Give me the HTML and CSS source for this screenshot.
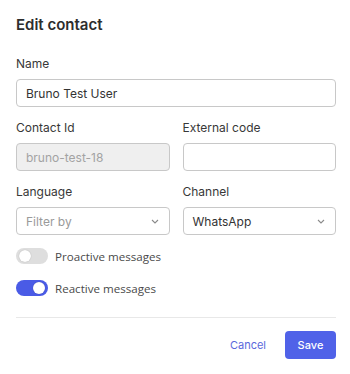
FILE: index.html
```html
<!DOCTYPE html>
<html>
	<head>
		<meta charset="utf-8">
		<title>Edit contact</title>
		<link rel="stylesheet" href="styles.css">
	</head>
	<body>
		<div class="dialog">
			<h2 class="title">Edit contact</h2>
			<div class="field">
				<label class="label">Name</label>
				<input class="input" type="text" value="Bruno Test User">
			</div>
			<div class="row">
				<div class="field">
					<label class="label">Contact Id</label>
					<input class="input" type="text" value="bruno-test-18" disabled>
				</div>
				<div class="field">
					<label class="label">External code</label>
					<input class="input" type="text">
				</div>
			</div>
			<div class="row">
				<div class="field">
					<label class="label">Language</label>
					<div class="select placeholder">
						<span>Filter by</span>
						<svg class="chevron" width="8" height="5" viewBox="0 0 8 5"><path d="M1 1l3 3 3-3" fill="none" stroke="#8a8a8a" stroke-width="1.1"/></svg>
					</div>
				</div>
				<div class="field">
					<label class="label">Channel</label>
					<div class="select">
						<span>WhatsApp</span>
						<svg class="chevron" width="8" height="5" viewBox="0 0 8 5"><path d="M1 1l3 3 3-3" fill="none" stroke="#8a8a8a" stroke-width="1.1"/></svg>
					</div>
				</div>
			</div>
			<div class="toggles">
				<div class="toggle-row">
					<span class="switch"><span class="knob"></span></span>
					<span class="toggle-label">Proactive messages</span>
				</div>
				<div class="toggle-row">
					<span class="switch on"><span class="knob"></span></span>
					<span class="toggle-label">Reactive messages</span>
				</div>
			</div>
			<div class="footer">
				<button type="button" class="btn-link">Cancel</button>
				<button type="button" class="btn-primary">Save</button>
			</div>
		</div>
	</body>
</html>
```

FILE: styles.css
```css
*{
	margin: 0;
	padding: 0;
	box-sizing: border-box;
}
body{
	background: #fff;
	font-family: Inter, "Liberation Sans", sans-serif;
	color: #333;
}
.dialog{
	width: 350px;
	padding: 16px 14px 0 16px;
}
.title{
	font-size: 15px;
	font-weight: 600;
	line-height: 18px;
	color: #2d2d2d;
	margin-bottom: 22px;
}
.field{
	display: flex;
	flex-direction: column;
	gap: 7px;
	flex: 1;
}
.label{
	font-size: 12px;
	line-height: 16px;
	color: #383838;
}
.row{
	display: flex;
	gap: 13px;
	margin-top: 13px;
}
.input, .select{
	height: 28px;
	border: 1px solid #c8c8c8;
	border-radius: 4px;
	padding: 0 9px;
	font-family: inherit;
	font-size: 12px;
	color: #333;
	background: #fff;
	width: 100%;
}
.input:disabled{
	background: #efefef;
	color: #a3a3a3;
}
.select{
	display: flex;
	align-items: center;
	justify-content: space-between;
	padding-right: 10px;
}
.select.placeholder{
	color: #9a9a9a;
}
.toggles{
	display: flex;
	flex-direction: column;
	gap: 16px;
	margin-top: 13px;
	padding-bottom: 21px;
	border-bottom: 1px solid #e8e8e8;
}
.toggle-row{
	display: flex;
	align-items: center;
	gap: 7px;
}
.switch{
	width: 32px;
	height: 16px;
	border-radius: 8px;
	background: #dedede;
	position: relative;
	display: inline-block;
}
.knob{
	position: absolute;
	top: 2px;
	left: 3px;
	width: 12px;
	height: 12px;
	border-radius: 50%;
	background: #fff;
	box-shadow: 0 0 1px rgba(0,0,0,0.3);
}
.switch.on{
	background: #4a5be6;
}
.switch.on .knob{
	left: 17px;
}
.toggle-label{
	font-family: "Open Sans", Inter, sans-serif;
	font-size: 11.6px;
	color: #4a4a4a;
}
.footer{
	display: flex;
	justify-content: flex-end;
	align-items: center;
	gap: 19px;
	padding-top: 13px;
}
.btn-link{
	border: none;
	background: none;
	font-family: inherit;
	font-size: 11px;
	color: #5a68dc;
	cursor: pointer;
}
.btn-primary{
	width: 51px;
	height: 28px;
	border: none;
	border-radius: 4px;
	background: #5062e8;
	color: #fff;
	font-family: inherit;
	font-size: 11px;
	font-weight: 500;
	cursor: pointer;
}
```
